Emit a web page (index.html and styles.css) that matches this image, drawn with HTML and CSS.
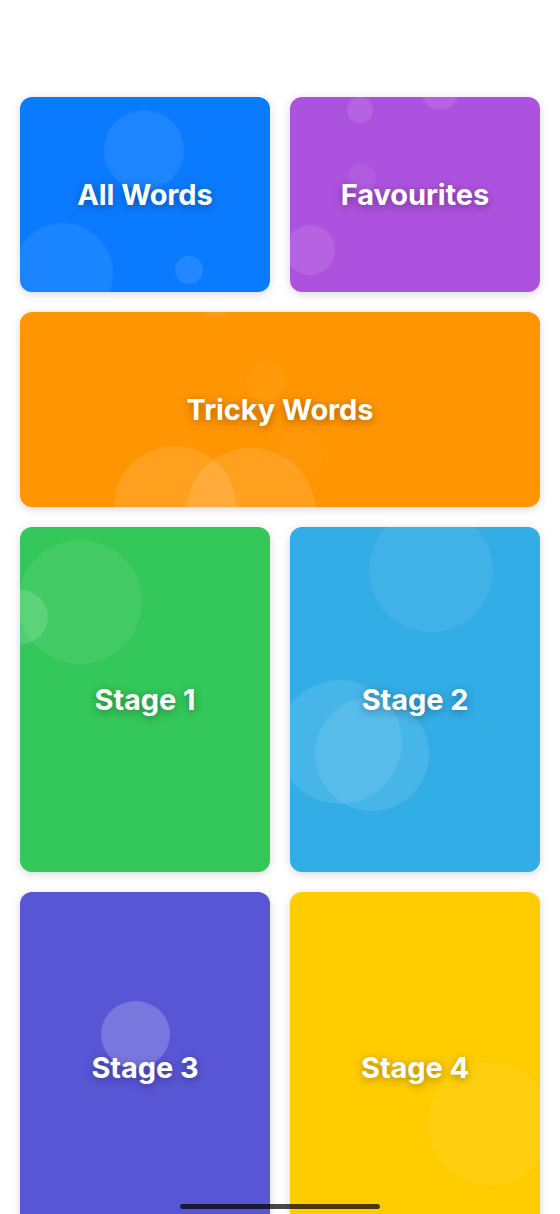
FILE: index.html
```html
<!DOCTYPE html>
<html lang="en">
<head>
<meta charset="utf-8">
<title>Words</title>
<link rel="stylesheet" href="styles.css">
</head>
<body>
<main class="grid">
  <a class="card blue">
    <span class="bubble b-a1"></span>
    <span class="bubble b-a2"></span>
    <span class="bubble b-a3"></span>
    <span class="label">All Words</span>
  </a>
  <a class="card purple">
    <span class="bubble b-f1"></span>
    <span class="bubble b-f2"></span>
    <span class="bubble b-f3"></span>
    <span class="bubble b-f4"></span>
    <span class="label">Favourites</span>
  </a>
  <a class="card orange wide">
    <span class="bubble b-t1"></span>
    <span class="bubble b-t2"></span>
    <span class="bubble b-t3"></span>
    <span class="bubble b-t4"></span>
    <span class="bubble b-t5"></span>
    <span class="label">Tricky Words</span>
  </a>
  <a class="card green">
    <span class="bubble b-s1a"></span>
    <span class="bubble b-s1b"></span>
    <span class="label">Stage 1</span>
  </a>
  <a class="card cyan">
    <span class="bubble b-s2a"></span>
    <span class="bubble b-s2b"></span>
    <span class="bubble b-s2c"></span>
    <span class="label">Stage 2</span>
  </a>
  <a class="card indigo">
    <span class="bubble b-s3a"></span>
    <span class="label">Stage 3</span>
  </a>
  <a class="card yellow">
    <span class="bubble b-s4a"></span>
    <span class="label">Stage 4</span>
  </a>
</main>
<div class="home-indicator"></div>
</body>
</html>
```

FILE: styles.css
```css
html, body {
  margin: 0;
  padding: 0;
  background: #ffffff;
  height: 1214px;
  overflow: hidden;
}

body {
  font-family: "Inter", "Roboto", "Liberation Sans", sans-serif;
  position: relative;
}

.grid {
  display: grid;
  grid-template-columns: 250px 250px;
  grid-template-rows: 195px 195px 345px 350px;
  gap: 20px;
  padding: 97px 20px 0 20px;
}

.card {
  position: relative;
  overflow: hidden;
  border-radius: 12px;
  display: flex;
  align-items: center;
  justify-content: center;
  box-shadow: 0 2px 10px rgba(0, 0, 0, 0.16);
  text-decoration: none;
}

.wide { grid-column: 1 / span 2; }

.blue { background: #0a7bff; }
.purple { background: #ad52de; }
.orange { background: #ff9500; }
.green { background: #34c759; }
.cyan { background: #32ade6; }
.indigo { background: #5856d5; }
.yellow { background: #ffcc00; }

.label {
  position: relative;
  color: #ffffff;
  font-size: 29px;
  font-weight: 700;
  letter-spacing: -0.1px;
  text-shadow: 0 2px 8px rgba(0, 0, 0, 0.35);
}

.bubble {
  position: absolute;
  border-radius: 50%;
  background: rgba(255, 255, 255, 0.08);
}

/* All Words */
.b-a1 { left: 84px; top: 13px; width: 80px; height: 80px; }
.b-a2 { left: -7px; top: 126px; width: 100px; height: 100px; background: rgba(255,255,255,0.07); }
.b-a3 { left: 155px; top: 159px; width: 28px; height: 28px; background: rgba(255,255,255,0.1); }

/* Favourites */
.b-f1 { left: 57px; top: 0px; width: 26px; height: 26px; background: rgba(255,255,255,0.1); }
.b-f2 { left: 132px; top: -23px; width: 36px; height: 36px; background: rgba(255,255,255,0.1); }
.b-f3 { left: 58px; top: 67px; width: 28px; height: 28px; background: rgba(255,255,255,0.06); }
.b-f4 { left: -5px; top: 128px; width: 50px; height: 50px; background: rgba(255,255,255,0.1); }

/* Tricky Words */
.b-t1 { left: 94px; top: 134px; width: 122px; height: 122px; background: rgba(255,255,255,0.12); }
.b-t2 { left: 166px; top: 136px; width: 130px; height: 130px; background: rgba(255,255,255,0.12); }
.b-t3 { left: 226px; top: 49px; width: 40px; height: 40px; background: rgba(255,255,255,0.04); }
.b-t4 { left: 184px; top: -18px; width: 24px; height: 24px; background: rgba(255,255,255,0.08); }
.b-t5 { left: 260px; top: 117px; width: 44px; height: 44px; background: rgba(255,255,255,0.03); }

/* Stage 1 */
.b-s1a { left: -2px; top: 13px; width: 124px; height: 124px; background: rgba(255,255,255,0.07); }
.b-s1b { left: -26px; top: 63px; width: 54px; height: 54px; background: rgba(255,255,255,0.14); }

/* Stage 2 */
.b-s2a { left: 79px; top: -19px; width: 124px; height: 124px; background: rgba(255,255,255,0.07); }
.b-s2b { left: -12px; top: 153px; width: 124px; height: 124px; background: rgba(255,255,255,0.1); }
.b-s2c { left: 25px; top: 170px; width: 114px; height: 114px; background: rgba(255,255,255,0.1); }

/* Stage 3 */
.b-s3a { left: 81px; top: 109px; width: 69px; height: 67px; background: rgba(255,255,255,0.2); }

/* Stage 4 */
.b-s4a { left: 138px; top: 170px; width: 124px; height: 124px; background: rgba(255,255,255,0.06); }

.home-indicator {
  position: absolute;
  left: 180px;
  top: 1204px;
  width: 200px;
  height: 5px;
  border-radius: 3px;
  background: rgba(0, 0, 0, 0.72);
}
```
